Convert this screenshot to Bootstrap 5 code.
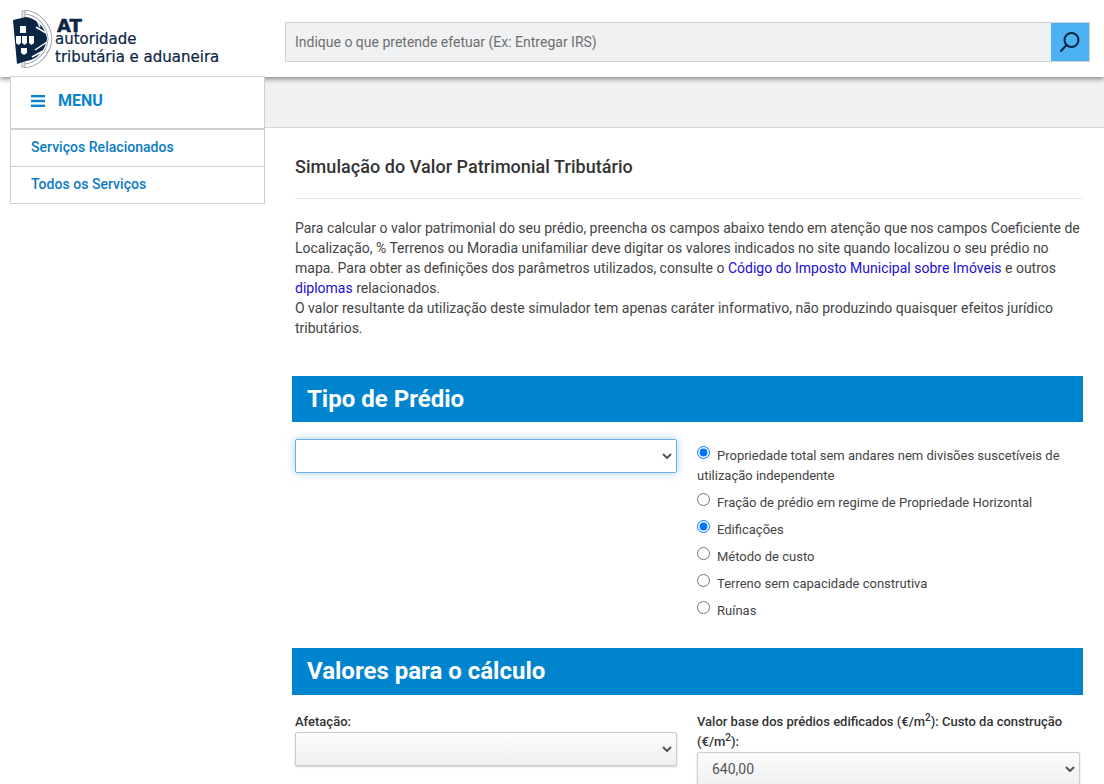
<!DOCTYPE html>
<html lang="pt">
<head>
    <meta charset="UTF-8">
    <title>Simulação do Valor Patrimonial Tributário</title>
    <meta name="viewport" content="width=device-width, initial-scale=1">
    <link href="https://cdn.jsdelivr.net/npm/bootstrap@5.3.0/dist/css/bootstrap.min.css" rel="stylesheet">
    <style>
        body {
            font-family: Roboto, "Liberation Sans", sans-serif;
            font-size: 14px;
            color: #333;
            background: #fff;
            height: 784px;
            overflow: hidden;
        }
        .top-bar {
            height: 77px;
            padding-left: 13px;
            box-shadow: 0 2px 5px rgba(0,0,0,.45);
            position: relative;
            z-index: 1;
            background: #fff;
        }
        .logo-box {
            width: 272px;
            height: 58px;
            margin-top: 10px;
        }
        .logo-text {
            font-family: "DejaVu Sans", sans-serif;
            color: #0b2545;
            font-size: 15px;
            line-height: 18px;
            padding-top: 10px;
            white-space: nowrap;
            -webkit-text-stroke: .2px #0b2545;
        }
        .logo-text b {
            display: block;
            font-size: 18px;
            line-height: 11px;
            font-weight: 700;
            margin-left: 2px;
            -webkit-text-stroke: .5px #0b2545;
        }
        .logo-text span {
            display: block;
            line-height: 17px;
        }
        .search-box {
            width: 805px;
            height: 40px;
            margin-top: 22px;
            border: 1px solid #d0d2d5;
            background: #f0f1f3;
        }
        .search-box input {
            background: transparent;
            border: 0;
            font-size: 14px;
            padding: 0 9px;
            color: #666;
        }
        .search-box input::placeholder { color: #6f6f6f; }
        .search-btn {
            width: 38px;
            background: #4db2f2;
            border: 0;
            padding: 0;
        }
        .side-col {
            width: 255px;
            margin-left: 10px;
            position: relative;
            z-index: 2;
            flex-shrink: 0;
        }
        .menu-head {
            height: 54px;
            background: #fff;
            border: 1px solid #ccd0d4;
            border-bottom-width: 2px;
            padding: 0 0 4px 20px;
            color: #0a84cd;
            font-weight: 700;
            font-size: 16px;
            gap: 13px;
            margin-top: -1px;
        }
        .side-link {
            display: block;
            height: 37px;
            line-height: 34px;
            padding-left: 20px;
            border: 1px solid #ccd0d4;
            border-top: 0;
            color: #0a7cc4;
            font-weight: 500;
            font-size: 14px;
            letter-spacing: .03px;
            text-decoration: none;
        }
        .grey-band {
            height: 51px;
            background: #f0f1f3;
            border-bottom: 1px solid #d5d7da;
        }
        .main-area {
            padding: 0 21px 0 27px;
        }
        .page-title {
            font-size: 18px;
            font-weight: 500;
            letter-spacing: .05px;
            color: #333;
            margin: 29px 0 0 3px;
            padding-bottom: 21px;
            line-height: 20px;
            border-bottom: 1px solid #e8e8e8;
        }
        .intro {
            margin: 19px 0 0 3px;
            line-height: 20px;
            font-size: 14px;
            color: #444;
        }
        .intro a { color: #1a0dd6; text-decoration: none; }
        .sec-title {
            background: #0084cd;
            color: #fff;
            font-size: 24px;
            font-weight: 700;
            height: 46px;
            line-height: 46px;
            padding-left: 15px;
            margin: 0;
        }
        .sec-one { margin-top: 38px; }
        .sec-two { margin-top: 20px; height: 47px; line-height: 46px; }
        .form-zone { padding: 17px 3px 0; gap: 20px; }
        .calc-zone { padding-top: 17px; }
        .half-col { width: 382px; flex-shrink: 0; }
        .half-col.wide-col { width: 383px; }
        .radio-col { padding-top: 7px; }
        .form-select.sel-focus,
        .form-select.sel-plain {
            height: 34px;
            border-radius: 2px;
            font-size: 14px;
            background-image: url("data:image/svg+xml,%3csvg xmlns='http://www.w3.org/2000/svg' viewBox='0 0 10 6'%3e%3cpath fill='none' stroke='%23555' stroke-width='2' d='M1 1l4 4 4-4'/%3e%3c/svg%3e");
            background-repeat: no-repeat;
            background-position: right 4px center;
            background-size: 10px 6px;
        }
        .form-select.sel-focus {
            border-color: #66afe9;
            box-shadow: 0 0 8px rgba(102,175,233,.6);
        }
        .form-select.sel-plain {
            border-color: #ccc;
            background-image: url("data:image/svg+xml,%3csvg xmlns='http://www.w3.org/2000/svg' viewBox='0 0 10 6'%3e%3cpath fill='none' stroke='%23555' stroke-width='2' d='M1 1l4 4 4-4'/%3e%3c/svg%3e"), linear-gradient(#fcfcfc, #eff0f1);
            background-position: right 4px center, 0 0;
            background-size: 10px 6px, 100% 100%;
            box-shadow: 0 1px 2px rgba(0,0,0,.2);
            color: #555;
            padding-left: 14px;
        }
        .radio-row {
            font-size: 13px;
            line-height: 20px;
            margin: 0 0 7px;
            color: #444;
        }
        .radio-row input {
            width: 13px;
            height: 13px;
            margin: 0 7px 0 0;
            vertical-align: 1px;
        }
        .calc-label {
            font-size: 13px;
            font-weight: 500;
            line-height: 20px;
            color: #333;
            margin: 0;
            display: block;
        }
        .calc-label sup { font-size: 10px; }
    </style>
</head>
<body>
<header class="top-bar d-flex">
    <div class="logo-box d-flex">
        <svg width="42" height="58" viewBox="13 10 42 58" class="flex-shrink-0">
            <path d="M24 12 C38 13 49 24 50 39 C49 53 38 65 24 66" fill="none" stroke="#8a93a0" stroke-width="4.5"/>
            <path d="M24 12 C38 13 49 24 50 39 C49 53 38 65 24 66" fill="none" stroke="#fff" stroke-width="3"/>
            <rect x="22" y="11" width="3" height="56" fill="#e6e8eb" stroke="#8a93a0" stroke-width=".7"/>
            <path d="M13 20 L26 17 C36 18 45 27 47 38 C46 50 37 60 26 61 L17 64 Z" fill="#0b2545"/>
            <path d="M20 26 h6 v7 h-6 Z M16 36 h5 v7 l-2.5 2 l-2.5 -2 Z M22 36 h5 v7 l-2.5 2 l-2.5 -2 Z M29 36 h5 v7 l-2.5 2 l-2.5 -2 Z M21 48 h6 v5 l-3 2 l-3 -2 Z" fill="#fff"/>
            <path d="M35 50 L47 42 M36 27 L46 33 M32 57 L43 51 M37 20 L40 27" stroke="#fff" stroke-width="1.5"/>
        </svg>
        <div class="logo-text">
            <b>AT</b>
            <span>autoridade</span>
            tributária e aduaneira
        </div>
    </div>
    <div class="search-box d-flex">
        <input class="flex-grow-1" type="text" placeholder="Indique o que pretende efetuar (Ex: Entregar IRS)">
        <button class="search-btn d-flex align-items-center justify-content-center" type="button" aria-label="Pesquisar">
            <svg width="22" height="22" viewBox="0 0 22 22" fill="none" stroke="#0b2545" stroke-width="2">
                <circle cx="12.5" cy="9" r="7"/>
                <path d="M7.5 14 L2 20" stroke-linecap="round"/>
            </svg>
        </button>
    </div>
</header>

<div class="d-flex">
    <nav class="side-col">
        <div class="menu-head d-flex align-items-center">
            <svg width="14" height="12" viewBox="0 0 14 12" fill="#0a84cd">
                <rect width="14" height="2.4" y="0"/>
                <rect width="14" height="2.4" y="4.8"/>
                <rect width="14" height="2.4" y="9.6"/>
            </svg>
            MENU
        </div>
        <a class="side-link" href="#">Serviços Relacionados</a>
        <a class="side-link" href="#">Todos os Serviços</a>
    </nav>
    <div class="flex-grow-1">
        <div class="grey-band"></div>
        <main class="main-area">
            <h1 class="page-title">Simulação do Valor Patrimonial Tributário</h1>
            <p class="intro">
                Para calcular o valor patrimonial do seu prédio, preencha os campos abaixo tendo em atenção que nos campos Coeficiente de Localização, % Terrenos ou Moradia unifamiliar deve digitar os valores indicados no site quando localizou o seu prédio no mapa. Para obter as definições dos parâmetros utilizados, consulte o <a href="#">Código do Imposto Municipal sobre Imóveis</a> e outros <a href="#">diplomas</a> relacionados.<br>
                O valor resultante da utilização deste simulador tem apenas caráter informativo, não produzindo quaisquer efeitos jurídico tributários.
            </p>

            <h2 class="sec-title sec-one">Tipo de Prédio</h2>
            <div class="form-zone d-flex">
                <div class="half-col">
                    <select class="form-select sel-focus"><option></option></select>
                </div>
                <div class="wide-col half-col radio-col">
                    <div class="radio-row"><input type="radio" name="t1" checked>Propriedade total sem andares nem divisões suscetíveis de utilização independente</div>
                    <div class="radio-row"><input type="radio" name="t2">Fração de prédio em regime de Propriedade Horizontal</div>
                    <div class="radio-row"><input type="radio" name="t3" checked>Edificações</div>
                    <div class="radio-row"><input type="radio" name="t4">Método de custo</div>
                    <div class="radio-row"><input type="radio" name="t5">Terreno sem capacidade construtiva</div>
                    <div class="radio-row"><input type="radio" name="t6">Ruínas</div>
                </div>
            </div>

            <h2 class="sec-title sec-two">Valores para o cálculo</h2>
            <div class="form-zone calc-zone d-flex">
                <div class="half-col">
                    <label class="calc-label">Afetação:</label>
                    <select class="form-select sel-plain"><option></option></select>
                </div>
                <div class="wide-col half-col">
                    <label class="calc-label">Valor base dos prédios edificados (€/m<sup>2</sup>): Custo da construção (€/m<sup>2</sup>):</label>
                    <select class="form-select sel-plain"><option>640,00</option></select>
                </div>
            </div>
        </main>
    </div>
</div>
</body>
</html>
